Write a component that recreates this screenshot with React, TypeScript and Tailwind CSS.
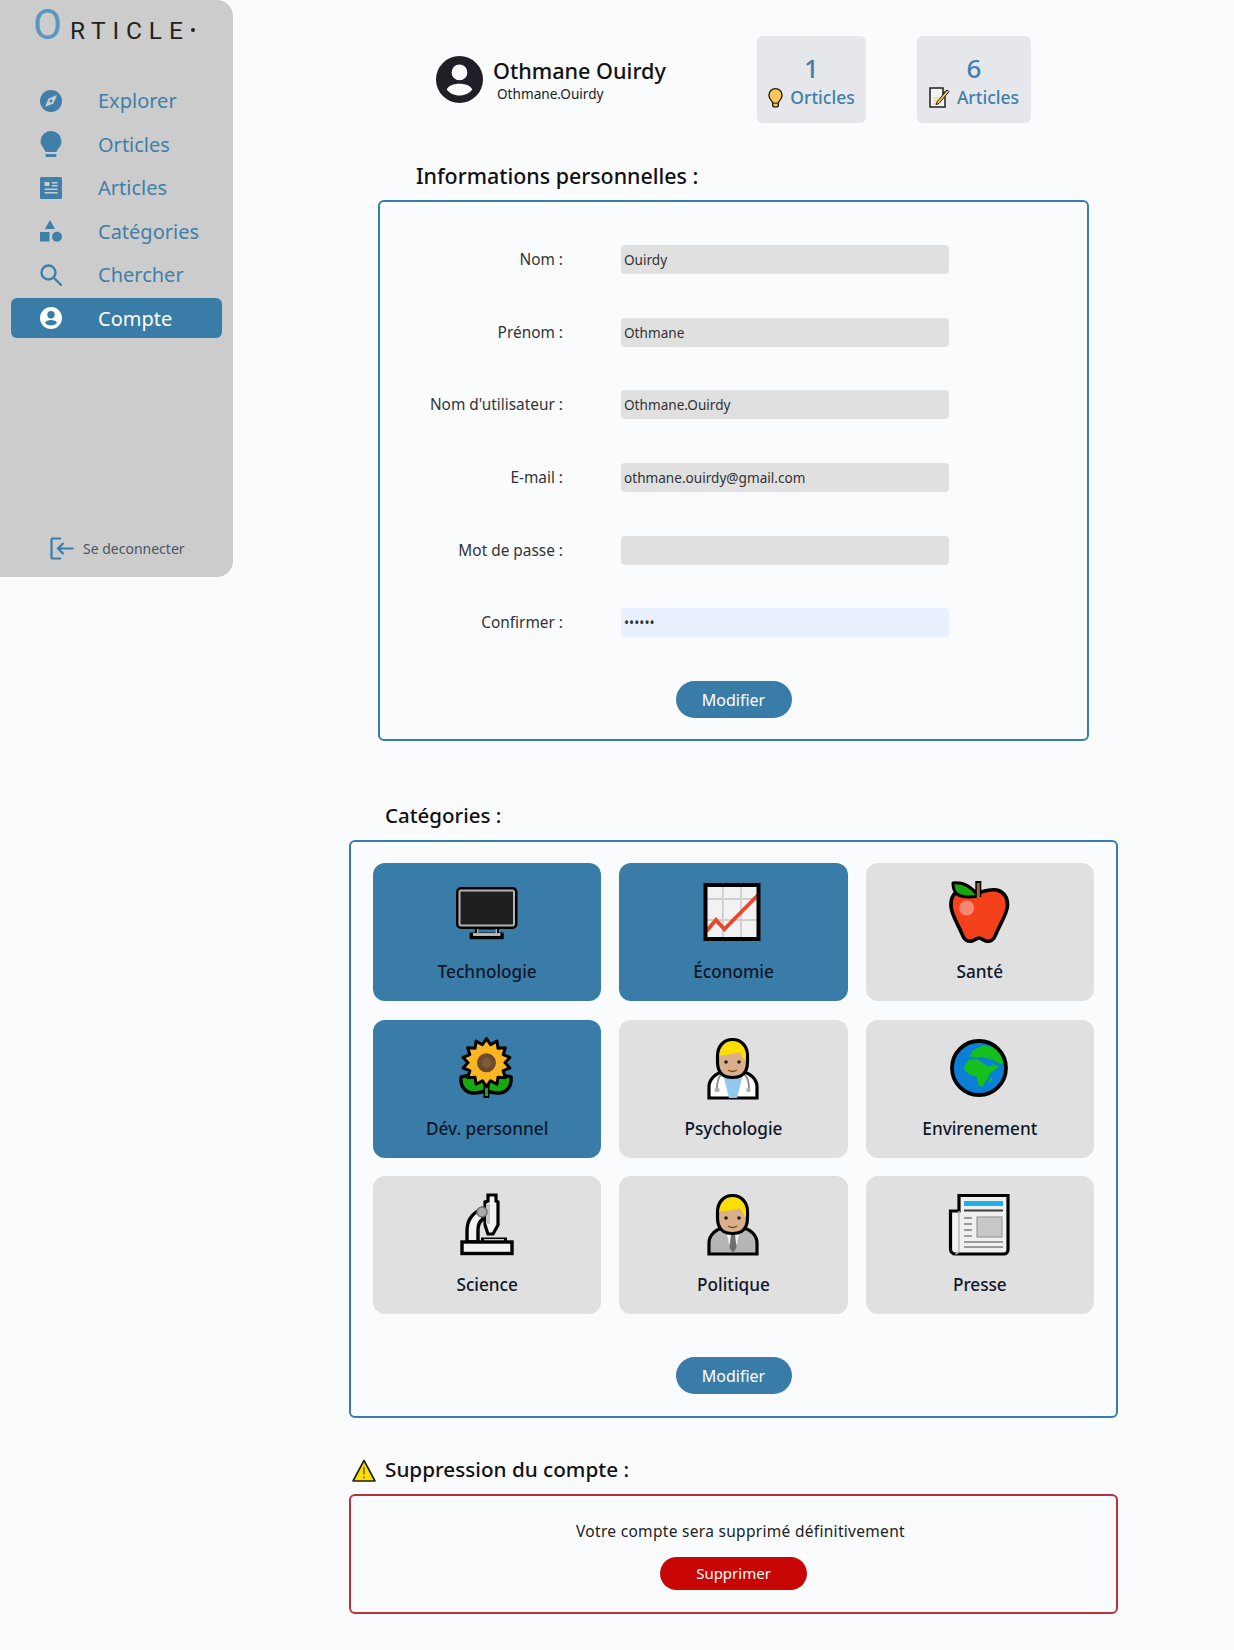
const starPoints = (cx: number, cy: number, outer: number, inner: number, count: number) =>
  Array.from({ length: count * 2 }, (_, i) => {
    const r = i % 2 === 0 ? outer : inner;
    const a = (Math.PI * i) / count - Math.PI / 2;
    return `${(cx + r * Math.cos(a)).toFixed(1)},${(cy + r * Math.sin(a)).toFixed(1)}`;
  }).join(" ");

function CompassIcon() {
  return (
    <svg viewBox="0 0 22 22" className="h-[22px] w-[22px]">
      <circle cx="11" cy="11" r="11" fill="currentColor" />
      <path d="M17 5 13.500 13.500 5 17 8.500 8.500Z" fill="#cccccc" />
      <circle cx="11" cy="11" r="1.400" fill="currentColor" />
    </svg>
  );
}

function BulbIcon() {
  return (
    <svg viewBox="0 0 22 27" className="h-[27px] w-[22px]">
      <path d="M11 0a10.500 10.500 0 0 1 10.500 10.500c0 3.500-1.700 5.500-3.200 7.300-.9 1.100-1.500 2.100-1.800 3.200h-11c-.3-1.100-.9-2.100-1.800-3.200C3.200 16 .5 14 .5 10.500A10.500 10.500 0 0 1 11 0Z" fill="currentColor" />
      <rect x="5.500" y="23" width="11" height="3" rx="1" fill="currentColor" />
    </svg>
  );
}

function NewsIcon() {
  return (
    <svg viewBox="0 0 22 22" className="h-[22px] w-[22px]">
      <rect width="22" height="22" rx="1.500" fill="currentColor" />
      <rect x="4.500" y="5" width="5" height="4" fill="#cccccc" />
      <rect x="12" y="5" width="5.500" height="1.500" fill="#cccccc" />
      <rect x="12" y="8" width="5.500" height="1.500" fill="#cccccc" />
      <rect x="4.500" y="11.500" width="13" height="1.500" fill="#cccccc" />
      <rect x="4.500" y="15" width="13" height="1.500" fill="#cccccc" />
    </svg>
  );
}

function ShapesIcon() {
  return (
    <svg viewBox="0 0 22 22" className="h-[22px] w-[22px]">
      <path d="M10 0 15 9H5Z" fill="currentColor" />
      <rect x="0" y="12" width="9.500" height="9.500" fill="currentColor" />
      <circle cx="17" cy="16.800" r="5" fill="currentColor" />
    </svg>
  );
}

function SearchIcon() {
  return (
    <svg viewBox="0 0 22 22" className="h-[22px] w-[22px]" fill="none" stroke="currentColor" strokeWidth="2.400">
      <circle cx="8.500" cy="8.500" r="7" />
      <path d="M13.500 13.500 21 21" strokeLinecap="round" />
    </svg>
  );
}

function AccountIcon({ className }: { className: string }) {
  return (
    <svg viewBox="0 0 22 22" className={className}>
      <path
        fillRule="evenodd"
        fill="currentColor"
        d="M11 0a11 11 0 1 1 0 22 11 11 0 0 1 0-22Zm0 4a3.700 3.700 0 1 0 0 7.400A3.700 3.700 0 0 0 11 4Zm0 9c-2.900 0-5.200 1-6 2.700C6.300 17.500 8.500 18.500 11 18.500s4.700-1 6-2.800c-.8-1.700-3.100-2.700-6-2.700Z"
      />
    </svg>
  );
}

function LogoutIcon() {
  return (
    <svg viewBox="0 0 24 23" className="h-[23px] w-6" fill="none" stroke="#3a7ca8" strokeWidth="2.200">
      <path d="M11 1.500H2.500a1 1 0 0 0-1 1v18a1 1 0 0 0 1 1H11" />
      <path d="M23.500 11.500H8M13.500 6 8 11.500l5.500 5.500" />
    </svg>
  );
}

function SmallBulb() {
  return (
    <svg viewBox="0 0 16 21" className="h-[21px] w-[15px]">
      <path d="M8 1a7 7 0 0 1 7 7c0 4-3 5.500-4 8v2.500a2 2 0 0 1-2 2H7a2 2 0 0 1-2-2V16c-1-2.500-4-4-4-8a7 7 0 0 1 7-7Z" fill="#fcc755" stroke="#1f1f1f" strokeWidth="1.500" />
      <path d="M5.500 16.500h5" stroke="#1f1f1f" strokeWidth="1.200" />
    </svg>
  );
}

function SmallMemo() {
  return (
    <svg viewBox="0 0 21 21" className="h-[21px] w-[21px]">
      <path d="M1 1h13v6l2-2v15H1Z" fill="#f3f3f3" stroke="#1f1f1f" strokeWidth="1.500" />
      <path d="M4 11h7M4 14h7M4 17h6" stroke="#f2c94c" strokeWidth="1.200" />
      <path d="M8 15 18 3l2 1.500L10 16.500l-3 1Z" fill="#fcc755" stroke="#1f1f1f" strokeWidth="1" />
    </svg>
  );
}

function WarningIcon() {
  return (
    <svg viewBox="0 0 24 23" className="h-[23px] w-6 shrink-0">
      <path d="M12 1.500 23 22H1Z" fill="#fcdf00" stroke="#1f1f1f" strokeWidth="1.600" strokeLinejoin="round" />
      <path d="M12 8v7.500" stroke="#7a6a00" strokeWidth="1.600" />
      <circle cx="12" cy="18.500" r="1" fill="#7a6a00" />
    </svg>
  );
}

function MonitorEmoji() {
  return (
    <svg viewBox="0 0 64 64" className="h-16 w-16">
      <rect x="19.800" y="47" width="24" height="7" fill="#000" />
      <rect x="14.500" y="52.500" width="34.300" height="6.800" rx="1" fill="#000" />
      <rect x="23.500" y="49.500" width="17" height="3" fill="#3a7ca8" />
      <rect x="18" y="53" width="27.500" height="3" fill="#b4b4b4" />
      <rect x="22" y="49" width="1.500" height="4" fill="#b4b4b4" />
      <rect x="40.500" y="49" width="1.500" height="4" fill="#b4b4b4" />
      <rect x="1" y="7" width="61.500" height="42" rx="5" fill="#000" />
      <rect x="4.500" y="10.500" width="54.500" height="35" rx="1.500" fill="#1f1f1f" stroke="#b4b4b4" strokeWidth="2" />
    </svg>
  );
}

function ChartEmoji() {
  return (
    <svg viewBox="0 0 64 64" className="h-16 w-16">
      <rect x="4.500" y="5" width="53" height="54" fill="#f2f2f2" />
      <path d="M21.800 5v54M40 5v54M5 19h53M5 40h53" stroke="#cfcfcf" strokeWidth="1.800" fill="none" />
      <path d="M5.500 51 15 40l8.300 9.300L57 15" stroke="#e5482a" strokeWidth="3.800" fill="none" />
      <rect x="4.500" y="5" width="53" height="54" fill="none" stroke="#000" strokeWidth="4" />
    </svg>
  );
}

function AppleEmoji() {
  return (
    <svg viewBox="0 0 64 64" className="h-16 w-16">
      <path d="M30 13C24 10 18 9 13 10 6 12 2.700 18 3 26c0 8 7 18 11 28 2 6 6 8 10 7 3-1 5-3 7-3s4 2 7 3c4 1 8-1 10-7 4-10 11-20 11.500-28 .2-8-3.500-14-10.500-16-6-1-13 1-19 3Z" fill="#f4411c" stroke="#000" strokeWidth="3.600" />
      <circle cx="18.700" cy="28" r="7.500" fill="#f68772" />
      <path d="M5 3c10-1 19 4 25 13-8 2-17 1-21-2C6 11.500 5 7 5 3Z" fill="#17a70f" stroke="#000" strokeWidth="3" strokeLinejoin="round" />
      <path d="M30.300 1v16" stroke="#000" strokeWidth="6" />
      <path d="M30.300 3v15" stroke="#9a6a3c" strokeWidth="3" />
    </svg>
  );
}

function SunflowerEmoji() {
  return (
    <svg viewBox="0 0 64 64" className="h-16 w-16">
      <path d="M31 44C27 38 13 38 6 40c-1 9 4 16 13 16 4 0 9-1 12-3 3 2 8 3 12 3 9 0 14-7 13-16-7-2-21-2-25 4Z" fill="#17a70f" stroke="#000" strokeWidth="3.400" strokeLinejoin="round" />
      <path d="M31.500 40v21" stroke="#000" strokeWidth="6" />
      <path d="M31.500 40v19" stroke="#17a70f" strokeWidth="3" />
      <polygon points={starPoints(31.500, 25.700, 24, 18.500, 14)} fill="#fcb624" stroke="#000" strokeWidth="3" strokeLinejoin="round" />
      <circle cx="31.500" cy="25.700" r="9.500" fill="#6f4a2d" />
      <circle cx="31.500" cy="25.700" r="5" fill="#7d5a3a" />
    </svg>
  );
}

function PersonEmoji({ kind }: { kind: "doctor" | "politician" }) {
  const doctor = kind === "doctor";
  return (
    <svg viewBox="0 0 64 64" className="h-16 w-16">
      <path d="M8 61V50c0-8 7-14 14-15h20c7 1 14 7 14 15v11Z" fill={doctor ? "#ffffff" : "#b6b6b6"} stroke="#000" strokeWidth="3.200" />
      {doctor ? (
        <>
          <path d="M22 37h20l-6 24h-8Z" fill="#92c8f0" />
          <path d="M21 37c-4 3-5 9-5 15M43 37c4 3 5 9 5 15" fill="none" stroke="#8a8a8a" strokeWidth="1.800" />
          <rect x="13.500" y="51" width="5" height="4" rx="1.500" fill="#b0b0b0" />
          <circle cx="47.500" cy="53" r="2.200" fill="#b0b0b0" />
        </>
      ) : (
        <>
          <path d="M25 37h14l-3 14h-8Z" fill="#f0f0f0" />
          <path d="M30 41h4l1.500 14-3.500 5-3.500-5Z" fill="#6f6f6f" />
        </>
      )}
      <path d="M31.500 2.500c9.500 0 15 7.500 15 16.500v6c0 7-2 11-6 13.500-2.500 1.500-5.500 2-9 2s-6.500-.5-9-2c-4-2.500-6-6.500-6-13.500v-6c0-9 5.500-16.500 15-16.500Z" fill="#d9b08a" stroke="#000" strokeWidth="3.200" />
      <path d="M18.500 19c0-8 5.500-14.500 13-14.500S45 10 45 19v5c-3-3-5-6-6-9-5 2-13 3-17 3-1.500 0-2.500.5-3.500 1Z" fill="#fcdf00" />
      <circle cx="25" cy="25" r="1.800" fill="#1f1f1f" />
      <circle cx="38" cy="25" r="1.800" fill="#1f1f1f" />
      <path d="M27 33c3 2 6 2 9 0" stroke="#7a4a2a" strokeWidth="1.400" fill="none" />
    </svg>
  );
}

function GlobeEmoji() {
  return (
    <svg viewBox="0 0 64 64" className="h-16 w-16">
      <circle cx="31" cy="31" r="27" fill="#0a7fd8" />
      <path d="M16 29.700 20.300 23l8.400-1 6.600 4.300L41 29.700l4.300-2.700 6 2.700-9.300 6.600-3.300 6.700-4 6.700-4.400-1.700-1.600-8.300L22 38l-5-4.300Z" fill="#16c01c" />
      <path d="M21.300 19.700 25.300 13l10-4.700L48.700 11.300 57.700 24.700 52 27l-6.700-4-10-2.700-8.300 0Z" fill="#16c01c" />
      <path d="M41 43l2.500-3 .8 3-2.500 3.500Z" fill="#16c01c" />
      <circle cx="31" cy="31" r="27" fill="none" stroke="#000" strokeWidth="3.800" />
    </svg>
  );
}

function MicroscopeEmoji() {
  return (
    <svg viewBox="0 0 64 64" className="h-16 w-16">
      <path d="M27 16c-10 4-15 12-15 22v11h11V37c0-5 2-9 5-11Z" fill="#f2f2f2" stroke="#000" strokeWidth="3.400" />
      <path d="M33 2h8v6l2 1v23l-5 9h-5l-3-9V9l3-1Z" fill="#f2f2f2" stroke="#000" strokeWidth="3.200" />
      <path d="M31 11h4v20h-4Z" fill="#c4c4c4" />
      <circle cx="27" cy="19" r="5" fill="#a8a8a8" stroke="#6f6f6f" strokeWidth="1.500" />
      <rect x="26" y="44.500" width="26" height="5" fill="#000" />
      <rect x="29" y="46" width="20" height="3" fill="#a4def0" />
      <rect x="7" y="49" width="50" height="11.500" fill="#f2f2f2" stroke="#000" strokeWidth="3.400" />
    </svg>
  );
}

function NewspaperEmoji() {
  return (
    <svg viewBox="0 0 64 64" className="h-16 w-16">
      <path d="M11 18H2.500v38a5 5 0 0 0 5 5H56a4 4 0 0 0 4-4V2.500H11Z" fill="#f0f0f0" stroke="#000" strokeWidth="3.200" />
      <path d="M11 18v38a5 5 0 0 1-3.500 5" fill="none" stroke="#b8b8b8" strokeWidth="1.500" />
      <rect x="16" y="8" width="39" height="5" fill="#1fb0e8" />
      <path d="M16 17.500h39" stroke="#3a3a3a" strokeWidth="1.800" />
      <path d="M16 25h8M16 31h8M16 37h8M16 43h8M16 49h39M16 54h39" stroke="#9a9a9a" strokeWidth="1.800" />
      <rect x="29" y="24" width="25" height="20" fill="#c8c8c8" stroke="#9a9a9a" strokeWidth="1.200" />
    </svg>
  );
}

const navItems = [
  { label: "Explorer", icon: <CompassIcon /> },
  { label: "Orticles", icon: <BulbIcon /> },
  { label: "Articles", icon: <NewsIcon /> },
  { label: "Catégories", icon: <ShapesIcon /> },
  { label: "Chercher", icon: <SearchIcon /> },
  { label: "Compte", icon: <AccountIcon className="h-[22px] w-[22px]" />, active: true },
];

const fields = [
  { label: "Nom :", value: "Ouirdy" },
  { label: "Prénom :", value: "Othmane" },
  { label: "Nom d'utilisateur :", value: "Othmane.Ouirdy" },
  { label: "E-mail :", value: "othmane.ouirdy@gmail.com" },
  { label: "Mot de passe :", value: "", type: "password" },
  { label: "Confirmer :", value: "123456", type: "password", autofilled: true },
];

const categories = [
  { label: "Technologie", icon: <MonitorEmoji />, selected: true },
  { label: "Économie", icon: <ChartEmoji />, selected: true },
  { label: "Santé", icon: <AppleEmoji /> },
  { label: "Dév. personnel", icon: <SunflowerEmoji />, selected: true },
  { label: "Psychologie", icon: <PersonEmoji kind="doctor" /> },
  { label: "Envirenement", icon: <GlobeEmoji /> },
  { label: "Science", icon: <MicroscopeEmoji /> },
  { label: "Politique", icon: <PersonEmoji kind="politician" /> },
  { label: "Presse", icon: <NewspaperEmoji /> },
];

function Sidebar() {
  return (
    <aside className="flex h-[577px] w-[233px] shrink-0 flex-col rounded-r-2xl bg-[#cccccc]">
      <div className="flex h-[80.500px] items-baseline pl-[33px] font-['Roboto',sans-serif] leading-[50px]">
        <span className="text-[42px] font-normal text-[#5b97bd]">O</span>
        <span className="ml-[8px] text-[24.500px] tracking-[6.900px] text-[#222222]">RTICLE</span>
        <span className="ml-[1px] h-[4px] w-[4px] -translate-y-[7px] rounded-full bg-[#222222]" />
      </div>
      <nav className="flex flex-col gap-[3.500px] px-[11px]">
        {navItems.map((item) => (
          <a
            key={item.label}
            className={`flex h-10 items-center gap-[36px] rounded-md pl-[29px] text-[20px] ${
              item.active ? "bg-[#3a7ca8] text-white" : "text-[#3f7fa9]"
            }`}
          >
            <span className="flex w-[22px] justify-center">{item.icon}</span>
            <span className="pt-[1px]">{item.label}</span>
          </a>
        ))}
      </nav>
      <div className="mt-auto mb-[17px] flex items-center gap-[9px] pl-[50px] text-[14px] text-[#4b5563]">
        <LogoutIcon />
        Se deconnecter
      </div>
    </aside>
  );
}

function PillButton({ label, danger }: { label: string; danger?: boolean }) {
  return (
    <button
      className={`rounded-full text-white ${
        danger ? "h-[33px] w-[147px] bg-[#c80606] text-[15px]" : "h-[37px] w-[116px] bg-[#3a7ca8] text-[16px]"
      }`}
    >
      {label}
    </button>
  );
}

function StatCard({ count, label, icon, width }: { count: number; label: string; icon: React.ReactNode; width: string }) {
  return (
    <div className={`flex h-[87px] flex-col items-center rounded-md bg-[#e5e7eb] pt-[15px] ${width}`}>
      <span className="text-[26px] leading-[34px] font-medium text-[#3f7fa9]">{count}</span>
      <span className="flex items-center gap-[7px] text-[17.500px] leading-[24px] font-medium text-[#3f7fa9]">
        {icon}
        {label}
      </span>
    </div>
  );
}

function SectionTitle({ children, className }: { children: React.ReactNode; className: string }) {
  return (
    <h2 className={`flex h-[30px] items-center font-medium text-[#111111] ${className}`}>{children}</h2>
  );
}

export default function App() {
  return (
    <div className="flex min-h-[1650px] bg-[#f9fbfd] font-['Noto_Sans',sans-serif]">
      <Sidebar />
      <main className="flex flex-1 flex-col items-center pt-9">
        <div className="flex items-center">
          <div className="flex w-[321px] items-center">
            <span className="text-[#1f1f27]">
              <AccountIcon className="h-[47px] w-[47px]" />
            </span>
            <div className="ml-[10px]">
              <div className="text-[21.600px] leading-[28px] font-medium text-[#111111]">Othmane Ouirdy</div>
              <div className="ml-[4px] text-[13.600px] leading-[18px] text-[#222222]">Othmane.Ouirdy</div>
            </div>
          </div>
          <StatCard count={1} label="Orticles" icon={<SmallBulb />} width="w-[109px]" />
          <div className="w-[51px]" />
          <StatCard count={6} label="Articles" icon={<SmallMemo />} width="w-[114px]" />
        </div>

        <section className="mt-[38px] w-[711px]">
          <SectionTitle className="pl-[38px] text-[21.400px]">Informations personnelles :</SectionTitle>
          <div className="mt-[9px] flex h-[541px] flex-col items-center rounded-md border-2 border-[#3a7ca8] pt-[43px]">
            <div className="flex w-full flex-col gap-[43.700px]">
              {fields.map((field) => (
                <label key={field.label} className="flex h-[29px] items-center gap-[58px]">
                  <span className="w-[183px] text-right text-[15.400px] text-[#333333]">{field.label}</span>
                  <input
                    readOnly
                    type={field.type ?? "text"}
                    value={field.value}
                    className={`h-[29px] w-[328px] rounded-[4px] px-[3px] text-[13.600px] text-[#333333] outline-none ${
                      field.autofilled ? "bg-[#e8f0fe]" : "bg-[#e0e0e0]"
                    }`}
                  />
                </label>
              ))}
            </div>
            <div className="mt-[44px]">
              <PillButton label="Modifier" />
            </div>
          </div>
        </section>

        <section className="mt-[59px] w-[769px]">
          <SectionTitle className="pl-[36px] text-[20.500px]">Catégories :</SectionTitle>
          <div className="mt-[10px] flex flex-col items-center rounded-md border-2 border-[#3a7ca8] pt-[21px] pb-[22px]">
            <div className="grid w-[721px] grid-cols-3 gap-x-[18px] gap-y-[18.500px]">
              {categories.map((cat) => (
                <div
                  key={cat.label}
                  className={`flex h-[138px] flex-col items-center rounded-xl pt-[17px] ${
                    cat.selected ? "bg-[#3a7ca8]" : "bg-[#e0e0e0]"
                  }`}
                >
                  {cat.icon}
                  <span className="mt-[15px] text-[17.200px] leading-[26px] font-medium text-[#0f172a]">{cat.label}</span>
                </div>
              ))}
            </div>
            <div className="mt-[43px]">
              <PillButton label="Modifier" />
            </div>
          </div>
        </section>

        <section className="mt-[37px] w-[769px]">
          <SectionTitle className="gap-[9px] pl-[3px] text-[20.700px]">
            <WarningIcon />
            Suppression du compte :
          </SectionTitle>
          <div className="mt-[9px] flex h-[120px] flex-col items-center rounded-md border-2 border-[#b5323c] pt-[22px]">
            <p className="pl-[14px] text-[15.500px] leading-[26px] tracking-[0.300px] text-[#222222]">
              Votre compte sera supprimé définitivement
            </p>
            <div className="mt-[13px]">
              <PillButton label="Supprimer" danger />
            </div>
          </div>
        </section>
      </main>
    </div>
  );
}
